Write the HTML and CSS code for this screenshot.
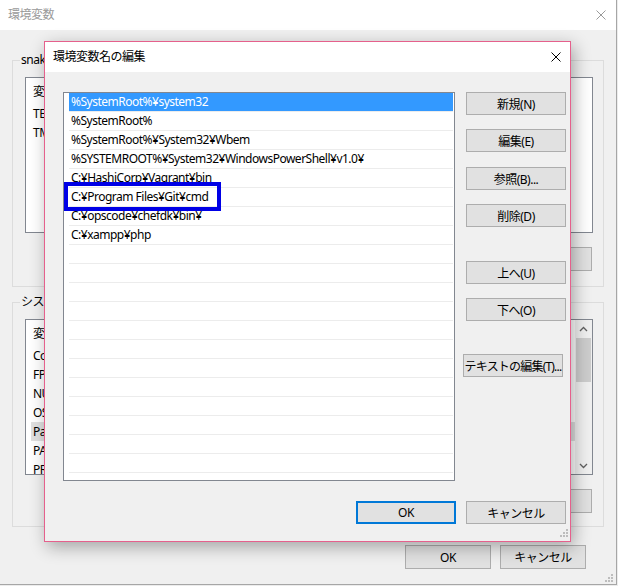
FILE: index.html
```html
<!DOCTYPE html>
<html lang="ja">
<head>
<meta charset="utf-8">
<title>環境変数名の編集</title>
<link rel="stylesheet" href="styles.css">
</head>
<body>
<div class="bgwin">
  <div class="bg-title">
    <span class="title-text">環境変数</span>
    <svg class="close" width="10" height="10" viewBox="0 0 10 10"><path d="M0.5 0.5L9.5 9.5M9.5 0.5L0.5 9.5" stroke="#9a9a9a" stroke-width="1" fill="none"/></svg>
  </div>
  <div class="bg-body">
    <fieldset class="group group-user">
      <legend>snake のユーザー環境変数(U)</legend>
      <div class="lv">
        <div class="lv-main">
          <div class="lv-head"><span class="col1">変数</span><span>値</span></div>
          <div class="lv-row"><span class="col1">TEMP</span><span>%USERPROFILE%¥AppData¥Local¥Temp</span></div>
          <div class="lv-row"><span class="col1">TMP</span><span>%USERPROFILE%¥AppData¥Local¥Temp</span></div>
        </div>
      </div>
      <div class="group-btns">
        <button class="btn">新規(N)...</button>
        <button class="btn">編集(E)...</button>
        <button class="btn">削除(D)</button>
      </div>
    </fieldset>
    <fieldset class="group group-sys">
      <legend>システム環境変数(S)</legend>
      <div class="lv">
        <div class="lv-main">
          <div class="lv-head"><span class="col1">変数</span><span>値</span></div>
          <div class="lv-row"><span class="col1">ComSpec</span><span>C:¥WINDOWS¥system32¥cmd.exe</span></div>
          <div class="lv-row"><span class="col1">FP_NO_HOST_CHECK</span><span>NO</span></div>
          <div class="lv-row"><span class="col1">NUMBER_OF_PROCESSORS</span><span>4</span></div>
          <div class="lv-row"><span class="col1">OS</span><span>Windows_NT</span></div>
          <div class="lv-row inactive-sel"><span class="col1">Path</span><span>C:¥WINDOWS¥system32;C:¥WINDOWS</span></div>
          <div class="lv-row"><span class="col1">PATHEXT</span><span>.COM;.EXE;.BAT;.CMD</span></div>
          <div class="lv-row"><span class="col1">PROCESSOR_ARCHITECTURE</span><span>AMD64</span></div>
        </div>
        <div class="sb">
          <div class="sb-arrow"><svg width="9" height="6" viewBox="0 0 9 6"><path d="M1 5L4.5 1.5L8 5" stroke="#606060" stroke-width="1.3" fill="none"/></svg></div>
          <div class="sb-thumb"></div>
          <div class="sb-space"></div>
          <div class="sb-arrow"><svg width="9" height="6" viewBox="0 0 9 6"><path d="M1 1L4.5 4.5L8 1" stroke="#606060" stroke-width="1.3" fill="none"/></svg></div>
        </div>
      </div>
      <div class="group-btns">
        <button class="btn">新規(W)...</button>
        <button class="btn">編集(I)...</button>
        <button class="btn">削除(L)</button>
      </div>
    </fieldset>
    <div class="bg-footer">
      <button class="btn">OK</button>
      <button class="btn">キャンセル</button>
    </div>
  </div>
  <svg class="grip bg-grip" width="8" height="8" viewBox="0 0 8 8" fill="#bdbdbd"><rect x="6" y="0" width="2" height="2"/><rect x="3" y="3" width="2" height="2"/><rect x="6" y="3" width="2" height="2"/><rect x="0" y="6" width="2" height="2"/><rect x="3" y="6" width="2" height="2"/><rect x="6" y="6" width="2" height="2"/></svg>
</div>

<div class="dialog">
  <div class="dlg-title">
    <span class="title-text">環境変数名の編集</span>
    <svg class="close" width="10" height="10" viewBox="0 0 10 10"><path d="M0.5 0.5L9.5 9.5M9.5 0.5L0.5 9.5" stroke="#000" stroke-width="1" fill="none"/></svg>
  </div>
  <div class="dlg-body">
    <div class="listbox">
      <div class="li sel">%SystemRoot%¥system32</div>
      <div class="li">%SystemRoot%</div>
      <div class="li">%SystemRoot%¥System32¥Wbem</div>
      <div class="li">%SYSTEMROOT%¥System32¥WindowsPowerShell¥v1.0¥</div>
      <div class="li">C:¥HashiCorp¥Vagrant¥bin</div>
      <div class="li">C:¥Program Files¥Git¥cmd</div>
      <div class="li">C:¥opscode¥chefdk¥bin¥</div>
      <div class="li">C:¥xampp¥php</div>
      <div class="li"></div>
      <div class="li"></div>
      <div class="li"></div>
      <div class="li"></div>
      <div class="li"></div>
      <div class="li"></div>
      <div class="li"></div>
      <div class="li"></div>
      <div class="li"></div>
      <div class="li"></div>
      <div class="li"></div>
      <div class="li"></div>
      <div class="li"></div>
      <div class="annot"></div>
    </div>
    <div class="side-btns">
      <button class="dbtn">新規(N)</button>
      <button class="dbtn gap14">編集(E)</button>
      <button class="dbtn gap15">参照(B)...</button>
      <button class="dbtn gap14">削除(D)</button>
      <button class="dbtn gap34">上へ(U)</button>
      <button class="dbtn gap14">下へ(O)</button>
      <button class="dbtn gap33 shift">テキストの編集(T)...</button>
    </div>
    <div class="dlg-footer">
      <button class="dbtn default">OK</button>
      <button class="dbtn">キャンセル</button>
    </div>
  </div>
  <svg class="grip dlg-grip" width="8" height="8" viewBox="0 0 8 8" fill="#bdbdbd"><rect x="6" y="0" width="2" height="2"/><rect x="3" y="3" width="2" height="2"/><rect x="6" y="3" width="2" height="2"/><rect x="0" y="6" width="2" height="2"/><rect x="3" y="6" width="2" height="2"/><rect x="6" y="6" width="2" height="2"/></svg>
</div>
</body>
</html>
```

FILE: styles.css
```css
* { box-sizing: border-box; }
html, body { margin: 0; padding: 0; }
body {
  width: 618px;
  height: 586px;
  overflow: hidden;
  position: relative;
  background: #ececec;
  font-family: "Noto Sans", "Noto Sans CJK JP", sans-serif;
  font-size: 12px;
  letter-spacing: -0.5px;
  color: #000;
}
button { font-family: inherit; font-size: 12px; letter-spacing: -0.5px; color: #000; padding: 0; cursor: default; }

/* background window */
.bgwin {
  position: relative;
  width: 617px;
  height: 585px;
  background: #f0f0f0;
  border-right: 1px solid #a6a6a6;
  border-bottom: 1px solid #a6a6a6;
  display: flex;
  flex-direction: column;
}
.bg-title {
  flex: none;
  height: 30px;
  background: #fff;
  display: flex;
  align-items: center;
  justify-content: space-between;
  padding: 0 10px 0 8px;
  color: #9a9a9a;
}
.title-text { line-height: 16px; }
.close { display: block; }
.bg-body {
  display: flex;
  flex-direction: column;
  padding: 22px 12px 0 12px;
}
.group {
  margin: 0;
  min-width: 0;
  border: 1px solid #dcdcdc;
  padding: 9px 10px 15px 12px;
}
.group legend {
  margin-left: -5px;
  padding: 0 1px;
  line-height: 16px;
  white-space: nowrap;
}
.group-sys { margin-top: 7px; padding-bottom: 13px; }
.lv {
  height: 156px;
  border: 1px solid #828790;
  background: #fff;
  display: flex;
  overflow: hidden;
}
.lv-main { flex: 1; min-width: 0; }
.lv-head {
  height: 26px;
  display: flex;
  align-items: center;
  padding-left: 7px;
}
.lv-row {
  height: 19px;
  display: flex;
  align-items: center;
  margin-left: 5px;
  padding-left: 2px;
  white-space: nowrap;
}
.col1 { width: 186px; flex: none; }
.lv-head .col1 { width: 188px; }
.inactive-sel { background: #e0e0e0; }
.sb {
  width: 17px;
  flex: none;
  background: #f0f0f0;
  display: flex;
  flex-direction: column;
  align-items: center;
}
.sb-arrow {
  width: 17px;
  height: 17px;
  display: flex;
  align-items: center;
  justify-content: center;
}
.sb-thumb { width: 15px; height: 44px; margin-top: 1px; background: #cdcdcd; }
.sb-space { flex: 1; }
.group-btns {
  display: flex;
  justify-content: flex-end;
  gap: 9px;
  margin-top: 14px;
  padding-right: 1px;
}
.btn {
  width: 86px;
  height: 24px;
  background: #e1e1e1;
  border: 1px solid #adadad;
}
.bg-footer {
  display: flex;
  justify-content: flex-end;
  gap: 9px;
  margin-top: 18px;
  padding-right: 18px;
}
.grip { position: absolute; display: block; }
.bg-grip { right: 3px; bottom: 2px; }

/* edit dialog */
.dialog {
  position: absolute;
  left: 44px;
  top: 41px;
  width: 527px;
  height: 501px;
  border: 1px solid #e5608c;
  background: #f0f0f0;
  box-shadow: 3px 5px 16px rgba(0, 0, 0, 0.32);
  display: flex;
  flex-direction: column;
}
.dlg-title {
  flex: none;
  height: 30px;
  background: #fff;
  display: flex;
  align-items: center;
  justify-content: space-between;
  padding: 0 9px 0 8px;
}
.dlg-body {
  display: grid;
  grid-template-columns: 392px 100px;
  grid-template-rows: 389px 23px;
  column-gap: 11px;
  row-gap: 20px;
  padding: 20px 4px 0 18px;
}
.listbox {
  position: relative;
  border: 1px solid #828790;
  background: #fff;
  overflow: hidden;
  padding: 0 1px 0 5px;
}
.li {
  height: 19px;
  line-height: 18px;
  border-bottom: 1px solid #ececec;
  padding-left: 2px;
  white-space: nowrap;
}
.li.sel { background: #3399ff; color: #fff; }
.annot {
  position: absolute;
  left: 0;
  top: 89px;
  width: 157px;
  height: 29px;
  border: 4px solid #0000e6;
}
.side-btns {
  display: flex;
  flex-direction: column;
  align-items: flex-start;
}
.dbtn {
  width: 100px;
  height: 23px;
  flex: none;
  background: #e1e1e1;
  border: 1px solid #adadad;
}
.gap14 { margin-top: 14px; }
.gap15 { margin-top: 15px; }
.gap34 { margin-top: 34px; }
.gap33 { margin-top: 33px; }
.shift { margin-left: -3px; white-space: nowrap; letter-spacing: -0.8px; }
.dlg-footer {
  grid-column: 1 / -1;
  display: flex;
  justify-content: flex-end;
  gap: 10px;
}
.dbtn.default { border: 2px solid #0078d7; }
.dlg-grip { right: 2px; bottom: 4px; }
```
